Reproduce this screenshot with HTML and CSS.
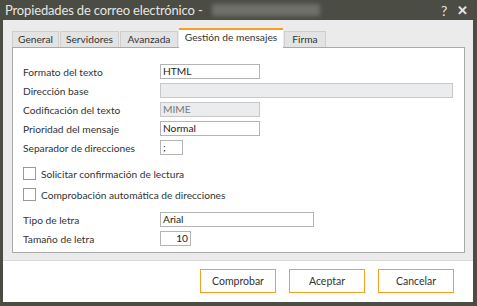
FILE: index.html
```html
<!DOCTYPE html>
<html lang="es">
<head>
  <meta charset="UTF-8" />
  <title>Propiedades de correo electrónico</title>
  <link rel="stylesheet" href="styles.css">
</head>
<body>
  <div class="window">
    <div class="titlebar">
      <span class="title">Propiedades de correo electrónico -</span>
      <span class="redacted"></span>
      <span class="controls"><span class="help">?</span><span class="close">✕</span></span>
    </div>

    <div class="client">
      <div class="body">
        <div class="tabs">
          <div class="tab">General</div>
          <div class="tab">Servidores</div>
          <div class="tab">Avanzada</div>
          <div class="tab active">Gestión de mensajes</div>
          <div class="tab">Firma</div>
        </div>

        <div class="panel">
          <div class="field">
            <label>Formato del texto</label>
            <div class="input w100">HTML</div>
          </div>
          <div class="field">
            <label>Dirección base</label>
            <div class="input wide disabled"></div>
          </div>
          <div class="field">
            <label>Codificación del texto</label>
            <div class="input w100 disabled">MIME</div>
          </div>
          <div class="field">
            <label>Prioridad del mensaje</label>
            <div class="input w100">Normal</div>
          </div>
          <div class="field">
            <label>Separador de direcciones</label>
            <div class="input w22">;</div>
          </div>

          <div class="checks">
            <div class="check"><span class="box"></span>Solicitar confirmación de lectura</div>
            <div class="check"><span class="box"></span>Comprobación automática de direcciones</div>
          </div>

          <div class="field">
            <label>Tipo de letra</label>
            <div class="input w153">Arial</div>
          </div>
          <div class="field">
            <label>Tamaño de letra</label>
            <div class="input w30 num">10</div>
          </div>
        </div>
      </div>

      <div class="footer">
        <button class="btn">Comprobar</button>
        <button class="btn">Aceptar</button>
        <button class="btn">Cancelar</button>
      </div>
    </div>
  </div>
</body>
</html>
```

FILE: styles.css
```css
body {
  margin: 0;
  padding: 0;
  font-family: 'Lato', sans-serif;
  font-size: 10.2px;
  color: #333;
}

.window {
  width: 477px;
  height: 306px;
  box-sizing: border-box;
  background: #4b4c44;
  display: flex;
  flex-direction: column;
}

.titlebar {
  height: 20px;
  display: flex;
  align-items: center;
  padding-left: 5px;
  color: #e6e6e2;
  font-size: 13px;
  letter-spacing: -0.15px;
}

.redacted {
  width: 108px;
  height: 12px;
  margin-left: 9px;
  background: #6f706a;
  filter: blur(2px);
}

.controls {
  margin-left: auto;
  display: flex;
  align-items: center;
  gap: 10px;
  padding-right: 9px;
  font-size: 14px;
}

.close {
  font-weight: bold;
  font-size: 13px;
}

.client {
  margin: 0 4px 4px 3px;
  flex: 1;
  display: flex;
  flex-direction: column;
  background: #fff;
}

.body {
  height: 241px;
  box-sizing: border-box;
  background: #ebebeb;
  border-bottom: 1px solid #dadada;
  padding: 9px 8px 0 9px;
}

.tabs {
  display: flex;
  height: 18px;
  align-items: flex-end;
}

.tab {
  height: 16px;
  box-sizing: border-box;
  border: 1px solid #cfcfcf;
  border-bottom: none;
  margin-right: 1px;
  background: #e3e3e3;
  line-height: 15px;
  text-align: center;
  white-space: nowrap;
}

.tab:nth-child(1) { width: 47px; }
.tab:nth-child(2) { width: 59px; }
.tab:nth-child(3) { width: 58px; }
.tab:nth-child(5) { width: 42px; }

.tab.active {
  width: 104px;
  height: 20px;
  margin-bottom: -1px;
  background: #fff;
  border: none;
  border-top: 2px solid #f5a023;
  position: relative;
  line-height: 14px;
}

.panel {
  height: 206px;
  box-sizing: border-box;
  background: #fff;
  border: 1px solid #a9a9a9;
  padding: 16px 0 0 10px;
  display: flex;
  flex-direction: column;
  gap: 4px;
}

.field {
  display: flex;
  align-items: center;
  height: 15px;
}

.field label {
  width: 137px;
}

.input {
  height: 15px;
  box-sizing: border-box;
  border: 1px solid #b4b4b4;
  background: #fff;
  padding: 0 2px;
  line-height: 13px;
  color: #222;
}

.input.disabled {
  background: #ebecee;
  border-color: #c8c8c8;
  color: #777;
}

.w100 { width: 100px; }
.w22 { width: 23px; }
.w30 { width: 31px; }
.w153 { width: 154px; }
.wide { width: 293px; }

.num {
  text-align: right;
}

.checks {
  display: flex;
  flex-direction: column;
  gap: 8px;
  margin: 8px 0 7px;
}

.check {
  display: flex;
  align-items: center;
  height: 13px;
}

.box {
  width: 11px;
  height: 11px;
  border: 1px solid #999;
  background: #fff;
  margin-right: 5px;
}

.footer {
  flex: 1;
  display: flex;
  align-items: center;
  justify-content: flex-end;
  gap: 13px;
  padding: 0 19px 1px 0;
}

.btn {
  width: 76px;
  height: 24px;
  border: 1px solid #f5a023;
  background: #fff;
  font-family: 'Lato', sans-serif;
  font-size: 10.5px;
  color: #333;
  padding: 0;
}
```
